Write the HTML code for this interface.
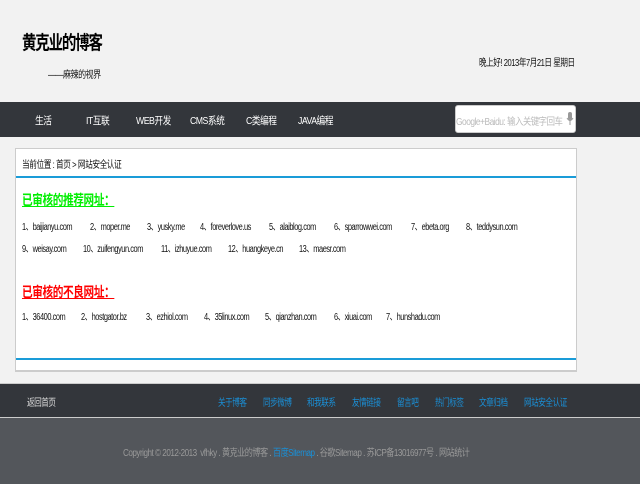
<!DOCTYPE html>
<html><head><meta charset="utf-8"><style>
*{margin:0;padding:0;box-sizing:border-box}
body{width:640px;height:484px;background:#f2f2f2;position:relative;overflow:hidden;font-family:"Liberation Sans","Noto Sans CJK SC",sans-serif;font-size:10px;color:#111}
.a{position:absolute;white-space:nowrap;letter-spacing:-0.6px;transform-origin:0 0}
#nav{position:absolute;left:0;top:102px;width:640px;height:35px;background:#33363b}
#nav .a{color:#fff;top:11px;font-size:10.5px;transform:scaleX(.83)}
#search{position:absolute;left:455px;top:105px;width:121px;height:28px;background:#fff;border-radius:3px;border:1px solid #ccc}
#box{position:absolute;left:15px;top:148px;width:562px;height:224px;background:#fff;border:1px solid #ccc;border-bottom:2px solid #ccc}
.bl{position:absolute;left:0;width:560px;height:2px;background:#1a9cd8}
#box .t{font-size:10px;transform:scaleX(.74)}
#f1{position:absolute;left:0;top:383px;width:640px;height:35px;background:#33363b;border-top:1px solid #ccc;border-bottom:1px solid #ccc}
#f1 .a{top:10px;font-size:10px;transform:scaleX(.76)}
#f2{position:absolute;left:0;top:418px;width:640px;height:66px;background:#53565b}
.lk{color:#1a8fd6}
</style></head><body>
<div class="a" style="left:22px;top:28px;font-size:19px;font-weight:bold;letter-spacing:-1.5px;color:#000;transform:scaleX(.76)">黄克业的博客</div>
<div class="a" style="left:48px;top:66px;font-size:10px;transform:scaleX(.8)">——麻辣的视界</div>
<div class="a" style="left:479px;top:54px;font-size:10px;transform:scaleX(.76)">晚上好! 2013年7月21日 星期日</div>
<div id="nav">
<div class="a" style="left:35px">生活</div>
<div class="a" style="left:86px">IT互联</div>
<div class="a" style="left:136px">WEB开发</div>
<div class="a" style="left:190px">CMS系统</div>
<div class="a" style="left:246px">C类编程</div>
<div class="a" style="left:298px">JAVA编程</div>
</div>
<div id="search"><div class="a" style="left:0;top:7px;color:#bbb;font-size:10px;transform:scaleX(.84)">Google+Baidu: 输入关键字回车</div>
<svg style="position:absolute;left:110px;top:6px" width="8" height="14"><rect x="2" y="0" width="4" height="8" rx="2" fill="#999"/><path d="M1 6 Q4 11 7 6 M4 9 V13" stroke="#999" fill="none"/></svg></div>
<div id="box">
<div class="a t" style="left:6px;top:7px;transform:scaleX(.77)">当前位置 : 首页 &gt; 网站安全认证</div>
<div class="bl" style="top:27px"></div>
<div class="a" style="left:6px;top:41px;font-size:14px;font-weight:bold;color:#00ee00;text-decoration:underline;letter-spacing:-0.5px;transform:scaleX(.76)">已审核的推荐网址：</div>
<div class="a t" style="left:6px;top:69px">1、baijianyu.com</div>
<div class="a t" style="left:74px;top:69px">2、moper.me</div>
<div class="a t" style="left:131px;top:69px">3、yusky.me</div>
<div class="a t" style="left:184px;top:69px">4、foreverlove.us</div>
<div class="a t" style="left:253px;top:69px">5、alaiblog.com</div>
<div class="a t" style="left:318px;top:69px">6、sparrowwei.com</div>
<div class="a t" style="left:395px;top:69px">7、ebeta.org</div>
<div class="a t" style="left:450px;top:69px">8、teddysun.com</div>
<div class="a t" style="left:6px;top:91px">9、weisay.com</div>
<div class="a t" style="left:67px;top:91px">10、zuifengyun.com</div>
<div class="a t" style="left:145px;top:91px">11、izhuyue.com</div>
<div class="a t" style="left:212px;top:91px">12、huangkeye.cn</div>
<div class="a t" style="left:283px;top:91px">13、maesr.com</div>
<div class="a" style="left:6px;top:133px;font-size:14px;font-weight:bold;color:#ff0000;text-decoration:underline;letter-spacing:-0.5px;transform:scaleX(.76)">已审核的不良网址：</div>
<div class="a t" style="left:6px;top:159px">1、36400.com</div>
<div class="a t" style="left:65px;top:159px">2、hostgator.bz</div>
<div class="a t" style="left:130px;top:159px">3、ezhiol.com</div>
<div class="a t" style="left:188px;top:159px">4、35linux.com</div>
<div class="a t" style="left:249px;top:159px">5、qianzhan.com</div>
<div class="a t" style="left:318px;top:159px">6、xiuai.com</div>
<div class="a t" style="left:370px;top:159px">7、hunshadu.com</div>
<div class="bl" style="top:209px"></div>
</div>
<div id="f1">
<div class="a" style="left:27px;color:#ddd">返回首页</div>
<div class="a lk" style="left:218px">关于博客</div>
<div class="a lk" style="left:263px">同步微博</div>
<div class="a lk" style="left:307px">和我联系</div>
<div class="a lk" style="left:352px">友情链接</div>
<div class="a lk" style="left:397px">留言吧</div>
<div class="a lk" style="left:435px">热门标签</div>
<div class="a lk" style="left:479px">文章归档</div>
<div class="a lk" style="left:524px">网站安全认证</div>
</div>
<div id="f2"><div class="a" style="left:123px;top:26px;color:#999;transform:scaleX(.81)">Copyright © 2012-2013 &nbsp;vfhky . 黄克业的博客 . <span class="lk">百度Sitemap</span> . 谷歌Sitemap . 苏ICP备13016977号 . 网站统计</div></div>
</body></html>
